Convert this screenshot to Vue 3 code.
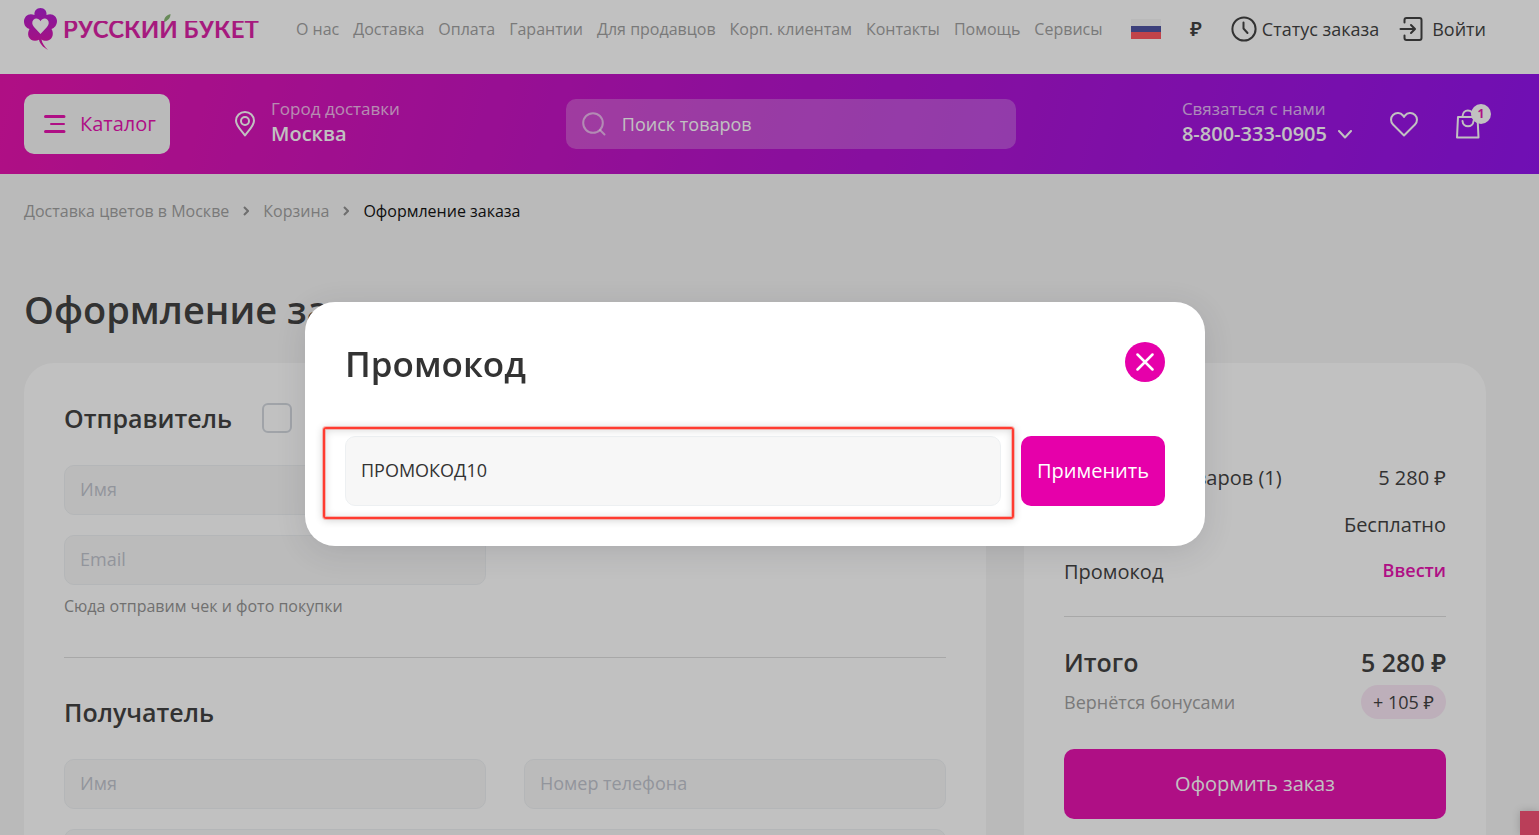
<template>
  <div class="page">
    <header class="header">
      <div class="header-top">
        <a class="logo" href="#" aria-label="Русский Букет">
          <svg class="logo-flower" width="34" height="42" viewBox="0 0 34 42" aria-hidden="true">
            <defs>
              <linearGradient id="petals" x1="0" y1="0" x2="0" y2="1">
                <stop offset="0" stop-color="#a90fd0" />
                <stop offset="1" stop-color="#e0009e" />
              </linearGradient>
            </defs>
            <path
              fill="url(#petals)"
              d="M16.500 0C20.500 0 23 3 22.500 7C28 4.500 33 8 33 13C33 17 30.500 20 27.500 21C30 25 29 31 24 32.500C21.500 33.200 19 32.500 17.500 31.500C18 35 20.500 38.500 24 42C18.500 39 15.800 35.500 15 31.800C11 34 6 32.500 4.500 28.500C3.500 25.500 4.500 22.500 5.500 21C2 20 0 17 0 13.500C0 8 5 4.500 10.500 7C10 3 12.500 0 16.500 0Z"
            />
            <path fill="#fff" d="M16.500 26L10 19C7.800 16.500 7.700 13.500 9.500 11.700C11.700 9.600 15 10.500 16.500 13.300C18 10.500 21.300 9.600 23.500 11.700C25.300 13.500 25.200 16.500 23 19Z" />
          </svg>
          <span class="logo-name">
            <span class="logo-text">РУССКИЙ БУКЕТ</span>
            <svg class="logo-leaf" width="7" height="8" viewBox="0 0 7 8" aria-hidden="true">
              <path fill="#7fb069" d="M0 8C0 3 3 1 6.500 0C6.500 4 4 6.500 0 8Z" />
            </svg>
          </span>
        </a>
        <nav class="nav">
          <a v-for="item in menu" :key="item" href="#">{{ item }}</a>
        </nav>
        <div class="tools">
          <button class="flag" type="button" aria-label="Язык: русский">
            <span class="flag-white"></span>
            <span class="flag-blue"></span>
            <span class="flag-red"></span>
          </button>
          <button class="currency" type="button" aria-label="Валюта">₽</button>
          <a class="tool" href="#">
            <svg width="26" height="26" viewBox="0 0 26 26" fill="none" stroke="#333" stroke-width="2" stroke-linecap="round" stroke-linejoin="round" aria-hidden="true">
              <circle cx="13" cy="13" r="11.600" />
              <path d="M12.500 6.500V12.500L16.500 17" />
            </svg>
            Статус заказа
          </a>
          <a class="tool login" href="#">
            <svg width="24" height="26" viewBox="0 0 24 26" fill="none" stroke="#333" stroke-width="2" stroke-linecap="round" stroke-linejoin="round" aria-hidden="true">
              <path d="M5.500 6.500V4Q5.500 2 7.500 2H20.500Q22.500 2 22.500 4V22Q22.500 24 20.500 24H7.500Q5.500 24 5.500 22V19.500" />
              <path d="M1.500 13H15.500M12 9L16 13L12 17" />
            </svg>
            Войти
          </a>
        </div>
      </div>

      <div class="header-bar">
        <div class="bar-left">
          <button class="catalog" type="button">
            <svg width="22" height="18" viewBox="0 0 22 18" fill="none" stroke="#e600aa" stroke-width="3" stroke-linecap="round" aria-hidden="true">
              <path d="M1.500 1.500H20M1.500 16.500H20" />
              <path d="M7 9H20" stroke-width="2" />
            </svg>
            <span>Каталог</span>
          </button>
          <button class="city" type="button">
            <svg width="20" height="26" viewBox="0 0 20 26" fill="none" stroke="#fff" stroke-width="2" stroke-linejoin="round" aria-hidden="true">
              <path d="M10 24.500C7 20 1 15 1 9.800C1 4.800 5 1 10 1C15 1 19 4.800 19 9.800C19 15 13 20 10 24.500Z" />
              <circle cx="10" cy="10" r="4" />
            </svg>
            <span class="stack">
              <span class="muted">Город доставки</span>
              <span class="strong">Москва</span>
            </span>
          </button>
        </div>
        <label class="search">
          <svg width="24" height="24" viewBox="0 0 24 24" fill="none" stroke="#fff" stroke-opacity="0.6" stroke-width="2" stroke-linecap="round" aria-hidden="true">
            <circle cx="11" cy="11" r="9.800" />
            <path d="M18 18L22.500 22.500" />
          </svg>
          <input type="search" placeholder="Поиск товаров" aria-label="Поиск товаров" />
        </label>
        <div class="bar-right">
          <button class="phone" type="button">
            <span class="stack">
              <span class="muted">Связаться с нами</span>
              <span class="strong">8-800-333-0905</span>
            </span>
            <svg width="14" height="9" viewBox="0 0 14 9" fill="none" stroke="#fff" stroke-width="2" stroke-linecap="round" stroke-linejoin="round" aria-hidden="true">
              <path d="M1 1L7 7.500L13 1" />
            </svg>
          </button>
          <a class="heart" href="#" aria-label="Избранное">
            <svg width="28" height="25" viewBox="0 0 28 25" fill="none" stroke="#fff" stroke-width="2" stroke-linejoin="round" aria-hidden="true">
              <path d="M14 23.500L3 12.500C0.300 9.700 0.500 5.500 3 3C6 0.200 10.500 0.500 13 3.500L14 5L15 3.500C17.500 0.500 22 0.200 25 3C27.500 5.500 27.700 9.700 25 12.500Z" />
            </svg>
          </a>
          <a class="bag" href="#" aria-label="Корзина">
            <svg width="24" height="30" viewBox="0 0 24 30" fill="none" stroke="#fff" stroke-width="2" stroke-linecap="round" stroke-linejoin="round" aria-hidden="true">
              <path d="M2 8H21.500L22.500 28.500H1Z" />
              <path d="M6.500 12C7 19 17 19 17.500 12M6.500 7.500C7 -0.500 16.500 -0.500 17.500 7.500" />
            </svg>
            <span class="badge">1</span>
          </a>
        </div>
      </div>
    </header>

    <main class="main">
      <nav class="crumbs" aria-label="Навигация">
        <a href="#">Доставка цветов в Москве</a>
        <svg width="6" height="10" viewBox="0 0 6 10" fill="none" stroke="#888" stroke-width="2" aria-hidden="true"><path d="M1 1L5 5L1 9" /></svg>
        <a href="#">Корзина</a>
        <svg width="6" height="10" viewBox="0 0 6 10" fill="none" stroke="#888" stroke-width="2" aria-hidden="true"><path d="M1 1L5 5L1 9" /></svg>
        <span class="current">Оформление заказа</span>
      </nav>
      <h1>Оформление заказа</h1>

      <div class="columns">
        <form class="card" @submit.prevent>
          <div class="section-head">
            <h2>Отправитель</h2>
            <input type="checkbox" aria-label="Отправить анонимно" />
          </div>
          <div class="fields">
            <input type="text" placeholder="Имя" aria-label="Имя отправителя" />
            <input type="tel" placeholder="Номер телефона" aria-label="Телефон отправителя" />
            <input type="email" placeholder="Email" aria-label="Email" />
          </div>
          <p class="hint">Сюда отправим чек и фото покупки</p>
          <hr />
          <h2 class="recipient">Получатель</h2>
          <div class="fields">
            <input type="text" placeholder="Имя" aria-label="Имя получателя" />
            <input type="tel" placeholder="Номер телефона" aria-label="Телефон получателя" />
            <input class="wide" type="text" placeholder="Адрес" aria-label="Адрес" />
          </div>
        </form>

        <aside class="card summary">
          <h2>Ваш заказ</h2>
          <div class="rows">
            <div class="row"><span>Стоимость товаров (1)</span><span>5 280 ₽</span></div>
            <div class="row"><span>Доставка</span><span>Бесплатно</span></div>
            <div class="row">
              <span>Промокод</span>
              <button class="enter" type="button" @click="visible = true">Ввести</button>
            </div>
          </div>
          <hr />
          <div class="row total"><span>Итого</span><span>5 280 ₽</span></div>
          <div class="row bonus"><span>Вернётся бонусами</span><span class="pill">+ 105 ₽</span></div>
          <button class="primary order" type="button">Оформить заказ</button>
        </aside>
      </div>
    </main>

    <button class="chat" type="button" aria-label="Чат"></button>

    <div v-if="visible" class="overlay" @click="close">
      <div class="modal" role="dialog" aria-labelledby="promo-title" @click.stop>
        <div class="modal-head">
          <h2 id="promo-title">Промокод</h2>
          <button class="modal-close" type="button" aria-label="Закрыть" @click="close">
            <svg width="18" height="18" viewBox="0 0 18 18" fill="none" stroke="#fff" stroke-width="2.500" stroke-linecap="round" aria-hidden="true">
              <path d="M1.500 1.500L16.500 16.500M16.500 1.500L1.500 16.500" />
            </svg>
          </button>
        </div>
        <form class="promo" @submit.prevent="close">
          <div class="promo-field">
            <input v-model="code" type="text" aria-label="Промокод" />
            <span class="marker"></span>
          </div>
          <button class="primary" type="submit">Применить</button>
        </form>
      </div>
    </div>
  </div>
</template>

<script setup>
import { ref } from 'vue'

const menu = [
  'О нас',
  'Доставка',
  'Оплата',
  'Гарантии',
  'Для продавцов',
  'Корп. клиентам',
  'Контакты',
  'Помощь',
  'Сервисы'
]

const visible = ref(true)
const code = ref('ПРОМОКОД10')

const close = () => {
  visible.value = false
}
</script>

<style>
body {
  background: #f5f5f5;
  overflow: hidden;
}
</style>

<style scoped>
.page,
.page * {
  box-sizing: border-box;
}

.page {
  height: 100vh;
  overflow: hidden;
  font-family: "Open Sans", "Noto Sans", sans-serif;
  font-size: 18px;
  color: #333;
}

a {
  color: inherit;
  text-decoration: none;
}

button,
input {
  font: inherit;
  color: inherit;
}

button {
  padding: 0;
  border: none;
  background: none;
  cursor: pointer;
}

svg {
  display: block;
  flex: none;
}

h1,
h2,
p {
  margin: 0;
}

h2 {
  font-size: 25px;
  line-height: 34px;
  font-weight: 600;
}

.header-top {
  display: flex;
  align-items: center;
  height: 74px;
  padding: 0 53px 16px 24px;
  background: #fff;
  white-space: nowrap;
}

.logo {
  display: flex;
  gap: 5px;
  align-items: center;
  width: 237px;
}

.logo-name {
  position: relative;
}

.logo-text {
  display: block;
  font-family: Lato, "Open Sans", sans-serif;
  font-size: 24px;
  line-height: 32px;
  font-weight: 700;
  color: #d9119f;
  clip-path: inset(8px 0 0 0);
}

.logo-leaf {
  position: absolute;
  top: 1px;
  left: 101px;
}

.nav {
  display: flex;
  gap: 14px;
  margin-left: 35px;
  font-size: 16px;
  color: #999;
}

.tools {
  display: flex;
  align-items: center;
  margin-left: auto;
}

.flag {
  display: flex;
  flex-direction: column;
  width: 30px;
  height: 20px;
}

.flag span {
  flex: 1;
}

.flag-white {
  background: #f5f5f5;
}

.flag-blue {
  background: #41479b;
}

.flag-red {
  background: #ff4b55;
}

.currency {
  width: 14px;
  margin: 0 28px;
  padding-bottom: 2px;
  font-size: 20px;
  font-weight: 600;
}

.tool {
  display: flex;
  gap: 5px;
  align-items: center;
}

.login {
  gap: 9px;
  margin-left: 20px;
}

.header-bar {
  display: flex;
  align-items: center;
  justify-content: space-between;
  height: 100px;
  padding: 0 53px 0 24px;
  background: linear-gradient(105deg, #e600a8 0%, #b400c8 48%, #8a00ec 100%);
  color: #fff;
}

.bar-left,
.bar-right {
  display: flex;
  align-items: center;
}

.catalog {
  display: flex;
  gap: 14px;
  align-items: center;
  justify-content: center;
  width: 146px;
  height: 60px;
  padding-left: 6px;
  border-radius: 10px;
  background: #f5f5f5;
  color: #e600aa;
  font-size: 20px;
  font-weight: 500;
}

.catalog span {
  padding-bottom: 2px;
}

.city {
  display: flex;
  gap: 16px;
  align-items: center;
  margin-left: 65px;
}

.stack {
  display: flex;
  flex-direction: column;
  padding-bottom: 6px;
  text-align: left;
  white-space: nowrap;
  line-height: 25px;
}

.muted {
  font-size: 17px;
  opacity: 0.7;
}

.strong {
  font-size: 20px;
  font-weight: 600;
}

.search {
  display: flex;
  gap: 16px;
  align-items: center;
  width: 450px;
  height: 50px;
  padding: 0 16px;
  border-radius: 10px;
  background: rgba(255, 255, 255, 0.25);
}

.search input {
  flex: 1;
  min-width: 0;
  padding: 0;
  border: none;
  outline: none;
  background: none;
}

.search input::placeholder {
  color: #fff;
  opacity: 1;
}

.phone {
  display: flex;
  gap: 11px;
  align-items: flex-end;
}

.phone svg {
  margin-bottom: 13px;
}

.heart {
  margin: 0 38px;
}

.bag {
  position: relative;
  width: 30px;
}

.badge {
  position: absolute;
  top: -5px;
  right: -5px;
  width: 20px;
  height: 20px;
  border-radius: 50%;
  background: #fff;
  color: #e600aa;
  font-size: 12px;
  line-height: 20px;
  font-weight: 700;
  text-align: center;
}

.main {
  padding: 26px 53px 0 24px;
}

.crumbs {
  display: flex;
  gap: 14px;
  align-items: center;
  font-size: 16px;
  line-height: 22px;
  color: #999;
}

.current {
  color: #000;
}

h1 {
  margin-top: 60px;
  font-size: 38px;
  line-height: 54px;
  font-weight: 600;
}

.columns {
  display: grid;
  grid-template-columns: minmax(0, 1fr) 462px;
  gap: 38px;
  margin-top: 27px;
}

.card {
  padding: 38px 40px;
  border-radius: 30px;
  background: #fff;
}

.section-head {
  display: flex;
  gap: 30px;
  align-items: center;
}

.section-head input {
  width: 30px;
  height: 30px;
  margin: 0;
  border: 2px solid #d0d5dc;
  border-radius: 6px;
  appearance: none;
}

.fields {
  display: grid;
  grid-template-columns: 1fr 1fr;
  gap: 20px 38px;
  margin-top: 30px;
}

.fields input,
.promo input {
  width: 100%;
  height: 50px;
  padding: 0 15px 2px;
  border: 1px solid #edf0f2;
  border-radius: 10px;
  outline: none;
  background: #f7f7f7;
}

.fields input::placeholder {
  color: #bcc0ca;
  opacity: 1;
}

.wide {
  grid-column: 1 / -1;
}

.hint {
  margin-top: 10px;
  font-size: 16px;
  line-height: 22px;
  color: #8c8c8c;
}

hr {
  height: 1px;
  margin: 40px 0 0;
  border: none;
  background: #dcdcdc;
}

.recipient {
  margin-top: 37px;
}

.rows {
  display: grid;
  gap: 19px;
  margin-top: 29px;
}

.row {
  display: flex;
  align-items: center;
  justify-content: space-between;
  font-size: 20px;
  line-height: 28px;
}

.enter {
  padding-bottom: 4px;
  color: #e600aa;
  font-size: 18px;
  line-height: 24px;
  font-weight: 600;
}

.summary hr {
  margin-top: 30px;
}

.total {
  margin-top: 28px;
  font-size: 25px;
  line-height: 34px;
  font-weight: 600;
}

.bonus {
  margin-top: 6px;
  color: #999;
  font-size: 18px;
}

.pill {
  padding: 3px 12px;
  border-radius: 17px;
  background: #fae6f5;
  color: #333;
}

.primary {
  height: 70px;
  padding-bottom: 2px;
  border-radius: 10px;
  background: #e600aa;
  color: #fff;
  font-size: 20px;
}

.order {
  width: 100%;
  margin-top: 30px;
}

.chat {
  position: fixed;
  right: 0;
  bottom: 0;
  width: 19px;
  height: 24px;
  background: #f5446a;
  box-shadow: 0 0 8px rgba(0, 0, 0, 0.2);
}

.overlay {
  position: fixed;
  inset: 0;
  display: flex;
  align-items: center;
  justify-content: center;
  padding: 13px 29px 0 0;
  background: rgba(51, 51, 51, 0.3);
}

.modal {
  width: 900px;
  padding: 40px;
  border-radius: 30px;
  background: #fff;
  box-shadow: 0 6px 30px rgba(40, 40, 60, 0.14);
}

.modal-head {
  display: flex;
  align-items: flex-start;
  justify-content: space-between;
}

.modal-head h2 {
  font-size: 35px;
  line-height: 44px;
}

.modal-close {
  display: flex;
  align-items: center;
  justify-content: center;
  width: 40px;
  height: 40px;
  border-radius: 50%;
  background: #e600aa;
}

.promo {
  display: flex;
  gap: 20px;
  margin-top: 50px;
}

.promo-field {
  position: relative;
  flex: 1;
}

.promo input {
  height: 70px;
}

.promo .primary {
  padding: 0 16px 2px;
}

.marker {
  position: absolute;
  inset: -9px -13px -13px -22px;
  border: 2px solid #ff3b30;
  border-radius: 3px;
  box-shadow:
    0 0 0 1px rgba(255, 59, 48, 0.3),
    0 1px 8px rgba(0, 0, 0, 0.2),
    inset 0 0 0 1px rgba(255, 59, 48, 0.3),
    inset 0 1px 8px rgba(0, 0, 0, 0.16);
  pointer-events: none;
}
</style>
